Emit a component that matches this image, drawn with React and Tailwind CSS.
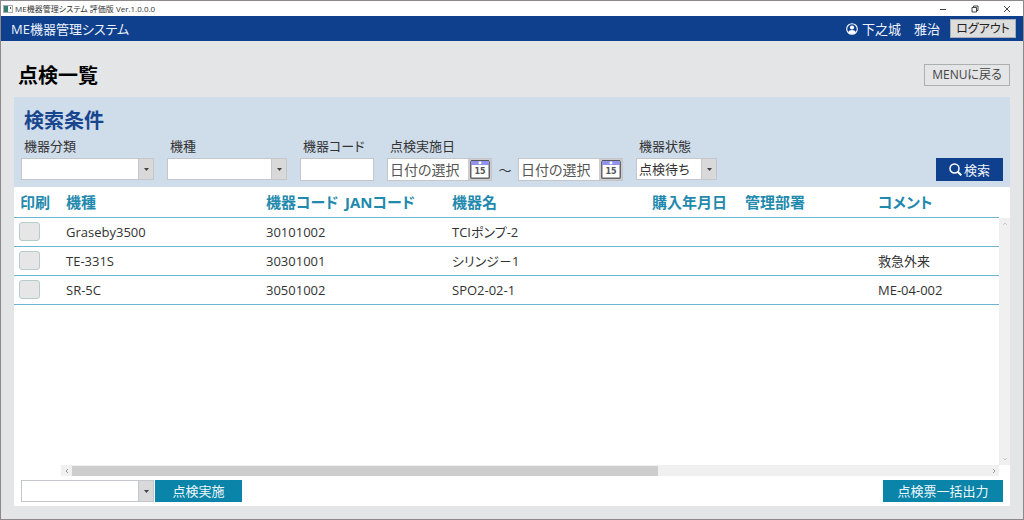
import React, { useState } from 'react';

const columns = [
  { key: 'model', label: '機種', width: 'w-[200px]' },
  { key: 'code', label: '機器コード', width: 'w-[79px]' },
  { key: 'jan', label: 'JANコード', width: 'w-[107px]' },
  { key: 'name', label: '機器名', width: 'w-[200px]' },
  { key: 'purchased', label: '購入年月日', width: 'w-[93px]' },
  { key: 'dept', label: '管理部署', width: 'w-[133px]' },
  { key: 'comment', label: 'コメント', width: '' },
];

const devices = [
  { model: 'Graseby3500', code: '30101002', name: 'TCIポンプ-2' },
  { model: 'TE-331S', code: '30301001', name: 'シリンジ－1', comment: '救急外来' },
  { model: 'SR-5C', code: '30501002', name: 'SPO2-02-1', comment: 'ME-04-002' },
];

const SelectBox = ({ id, label, options, className }) => (
  <div className={`relative h-[22px] ${className}`}>
    <select
      id={id}
      aria-label={label}
      className="block h-full w-full appearance-none border border-[#c3c6ca] bg-white pl-0.5 pr-4 text-[13px] leading-5 text-[#333] outline-none"
    >
      {options.map((option) => (
        <option key={option}>{option}</option>
      ))}
    </select>
    <span className="pointer-events-none absolute inset-y-0 right-0 flex w-4 items-center justify-center border border-[#c3c6ca] bg-[#d9d9d9]">
      <svg width="5" height="3" viewBox="0 0 5 3" aria-hidden="true">
        <path d="M0 0h5L2.5 3z" fill="#444" />
      </svg>
    </span>
  </div>
);

const Field = ({ id, label, children }) => (
  <div className="flex flex-col gap-1">
    <label htmlFor={id} className="pl-[3px] text-[13px] leading-4 text-[#333]">
      {label}
    </label>
    {children}
  </div>
);

const CalendarIcon = () => (
  <svg width="20" height="19" viewBox="0 0 20 19" aria-hidden="true">
    <rect x="0.75" y="1.25" width="18.5" height="17" rx="1" fill="#fff" stroke="#66666a" strokeWidth="1.5" />
    <rect x="1" y="1" width="18" height="4" fill="#8f93ea" />
    <path d="M1 .5h18" stroke="#55555f" />
    <circle cx="10" cy="2.8" r="1.5" fill="#fff" />
    <text x="10" y="14" textAnchor="middle" fontSize="8" fontWeight="700" fill="#555" fontFamily="DejaVu Sans, sans-serif">
      15
    </text>
  </svg>
);

const DateBox = ({ id, label }) => (
  <div className="flex h-[23px] w-[105px] items-center border border-[#c3c6ca] bg-white">
    <input
      id={id}
      aria-label={label}
      placeholder="日付の選択"
      className="h-full min-w-0 flex-1 pl-0.5 text-[14px] leading-5 outline-none placeholder:text-[#555]"
    />
    <button type="button" aria-label="カレンダー" className="flex h-full w-[23px] items-center justify-center bg-[#cdcdcf]">
      <CalendarIcon />
    </button>
  </div>
);

const TitleBar = () => (
  <div className="flex h-[15px] items-center bg-white pl-0.5 pr-3 text-[#333]">
    <svg width="10" height="8" viewBox="0 0 10 8" aria-hidden="true">
      <rect x=".5" y=".5" width="9" height="7" fill="#f4f6f6" stroke="#a6acae" />
      <rect x="1" y="1" width="4" height="6" fill="#33806f" />
      <path d="M7.500 2v2" stroke="#555" />
    </svg>
    <span className="ml-0.5 flex-1 text-[8px] leading-3">ME機器管理システム 評価版 Ver.1.0.0.0</span>
    <div className="flex items-center gap-6">
      <button type="button" aria-label="最小化">
        <svg width="8" height="8" viewBox="0 0 8 8" fill="none" stroke="#444" aria-hidden="true">
          <path d="M1 4.500h6" />
        </svg>
      </button>
      <button type="button" aria-label="元に戻す">
        <svg width="8" height="8" viewBox="0 0 8 8" fill="none" stroke="#444" aria-hidden="true">
          <path d="M1 2.500h4.500v4.500H1zM2.500 2.500V1H7v4.500H5.500" />
        </svg>
      </button>
      <button type="button" aria-label="閉じる">
        <svg width="8" height="8" viewBox="0 0 8 8" fill="none" stroke="#444" aria-hidden="true">
          <path d="M1 1l6 6M7 1L1 7" />
        </svg>
      </button>
    </div>
  </div>
);

const AppHeader = () => (
  <header className="flex h-[25px] items-center bg-[#0f408d] pl-2.5 pr-[7px] text-[13px] leading-4 text-[#eef3fb]">
    <span className="flex-1">ME機器管理システム</span>
    <svg width="12" height="12" viewBox="0 0 12 12" className="mr-1" aria-hidden="true">
      <circle cx="6" cy="6" r="5.300" fill="none" stroke="#fff" strokeWidth="1.100" />
      <circle cx="6" cy="4.500" r="2.100" fill="#fff" />
      <path d="M2.200 9.300c.6-1.700 2-2.400 3.800-2.400s3.200.7 3.800 2.400A5 5 0 0 1 6 11a5 5 0 0 1-3.800-1.700z" fill="#fff" />
    </svg>
    <span className="mr-2.5 [font-feature-settings:normal]">下之城　雅治</span>
    <button type="button" className="h-[19px] w-[66px] border border-[#a9adb5] bg-[#dddddd] text-[12px] text-[#222]">
      ログアウト
    </button>
  </header>
);

const SearchPanel = () => (
  <section className="bg-[#cfdcea] px-[7px] pb-1.5 pt-3">
    <h2 className="pl-[3px] text-[20px] font-bold leading-6 text-[#17468f]">検索条件</h2>
    <form className="mt-[5px] flex items-end justify-between" onSubmit={(e) => e.preventDefault()}>
      <div className="flex items-start gap-[13px]">
        <Field id="category" label="機器分類">
          <SelectBox id="category" options={['']} className="w-[133px]" />
        </Field>
        <Field id="model" label="機種">
          <SelectBox id="model" options={['']} className="w-[120px]" />
        </Field>
        <Field id="code" label="機器コード">
          <input id="code" className="h-[23px] w-[74px] border border-[#c3c6ca] bg-white px-1 text-[13px] outline-none" />
        </Field>
        <Field id="date-from" label="点検実施日">
          <div className="flex items-center">
            <DateBox id="date-from" />
            <span className="w-[26px] text-center text-[13px] leading-4 text-[#333]">～</span>
            <DateBox id="date-to" label="点検実施日（終了）" />
          </div>
        </Field>
        <Field id="status" label="機器状態">
          <SelectBox id="status" options={['点検待ち']} className="w-[81px]" />
        </Field>
      </div>
      <button
        type="submit"
        className="flex h-[23px] w-[67px] items-center justify-center gap-0.5 bg-[#0f408d] text-[13px] leading-4 text-[#eef3fb]"
      >
        <svg width="13" height="13" viewBox="0 0 13 13" fill="none" stroke="#fff" strokeWidth="1.500" aria-hidden="true">
          <circle cx="5.500" cy="5.500" r="4.500" />
          <path d="M8.700 8.700L12.300 12.300" strokeWidth="2" />
        </svg>
        検索
      </button>
    </form>
  </section>
);

const DeviceTable = () => {
  const [checked, setChecked] = useState({});

  const toggle = (code) => setChecked((prev) => ({ ...prev, [code]: !prev[code] }));

  return (
    <table className="w-full table-fixed border-collapse self-start text-left text-[#333]">
      <thead>
        <tr className="h-[30px] border-b border-[#6db6cf] text-[15px] leading-5 text-[#1f8aad]">
          <th className="w-[52px] pl-1.5 font-bold">印刷</th>
          {columns.map((col) => (
            <th key={col.key} className={`whitespace-nowrap font-bold ${col.width}`}>
              {col.label}
            </th>
          ))}
        </tr>
      </thead>
      <tbody>
        {devices.map((device) => (
          <tr key={device.code} className="h-[29px] border-b border-[#6db6cf] text-[13px] leading-4">
            <td className="pl-[5px]">
              <input
                type="checkbox"
                aria-label={`${device.model} を印刷`}
                checked={!!checked[device.code]}
                onChange={() => toggle(device.code)}
                className="block h-[19px] w-[21px] appearance-none rounded-[3px] border border-[#b5cccb] bg-[#e6e6e6] checked:bg-[#0a84a8]"
              />
            </td>
            {columns.map((col) => (
              <td key={col.key} className="whitespace-nowrap">
                {device[col.key]}
              </td>
            ))}
          </tr>
        ))}
      </tbody>
    </table>
  );
};

const Chevron = ({ d, color }) => (
  <svg width="6" height="6" viewBox="0 0 6 6" fill="none" stroke={color} aria-hidden="true">
    <path d={d} />
  </svg>
);

const App = () => (
  <div className="flex min-h-screen flex-col border border-[#8c888c] bg-[#e4e5e7] font-['Open_Sans','Noto_Sans_CJK_JP',sans-serif] [font-feature-settings:'palt']">
    <TitleBar />
    <AppHeader />
    <main className="flex flex-1 flex-col px-[13px] pb-[13px] pt-[23px]">
      <div className="mb-[11px] flex h-[22px] items-center justify-between pl-1">
        <h1 className="pt-0.5 text-[20px] font-bold leading-6 text-black">点検一覧</h1>
        <button type="button" className="h-[22px] w-[86px] border border-[#adafb1] text-[12px] leading-4 text-[#444]">
          MENUに戻る
        </button>
      </div>

      <div className="flex flex-1 flex-col bg-white">
        <SearchPanel />

        <div className="flex flex-1">
          <div className="flex min-w-0 flex-1">
            <DeviceTable />
          </div>
          <div className="mt-[31px] flex w-[11px] flex-col items-center justify-between bg-[#f0f0f0] py-[3px]">
            <Chevron d="M1 4l2-2 2 2" color="#c8c8c8" />
            <Chevron d="M1 2l2 2 2-2" color="#c8c8c8" />
          </div>
        </div>

        <div className="ml-[47px] mr-[11px] flex h-[11px] items-center bg-[#f0f0f0]">
          <span className="flex w-[11px] justify-center">
            <Chevron d="M4 1L2 3l2 2" color="#999" />
          </span>
          <div className="flex h-full flex-1 items-center">
            <div className="h-[10px] w-[64%] bg-[#cdcdcd]" />
          </div>
          <span className="flex w-[11px] justify-center">
            <Chevron d="M2 1l2 2-2 2" color="#999" />
          </span>
        </div>

        <div className="mb-1 mt-1 flex items-center justify-between px-[7px]">
          <div className="flex items-center gap-px">
            <SelectBox label="点検種別" options={['']} className="w-[133px]" />
            <button type="button" className="h-[22px] w-[87px] bg-[#0a84a8] text-[13px] leading-4 text-[#eef8fb]">
              点検実施
            </button>
          </div>
          <button type="button" className="h-[22px] w-[120px] bg-[#0a84a8] text-[13px] leading-4 text-[#eef8fb]">
            点検票一括出力
          </button>
        </div>
      </div>
    </main>
  </div>
);

export default App;
